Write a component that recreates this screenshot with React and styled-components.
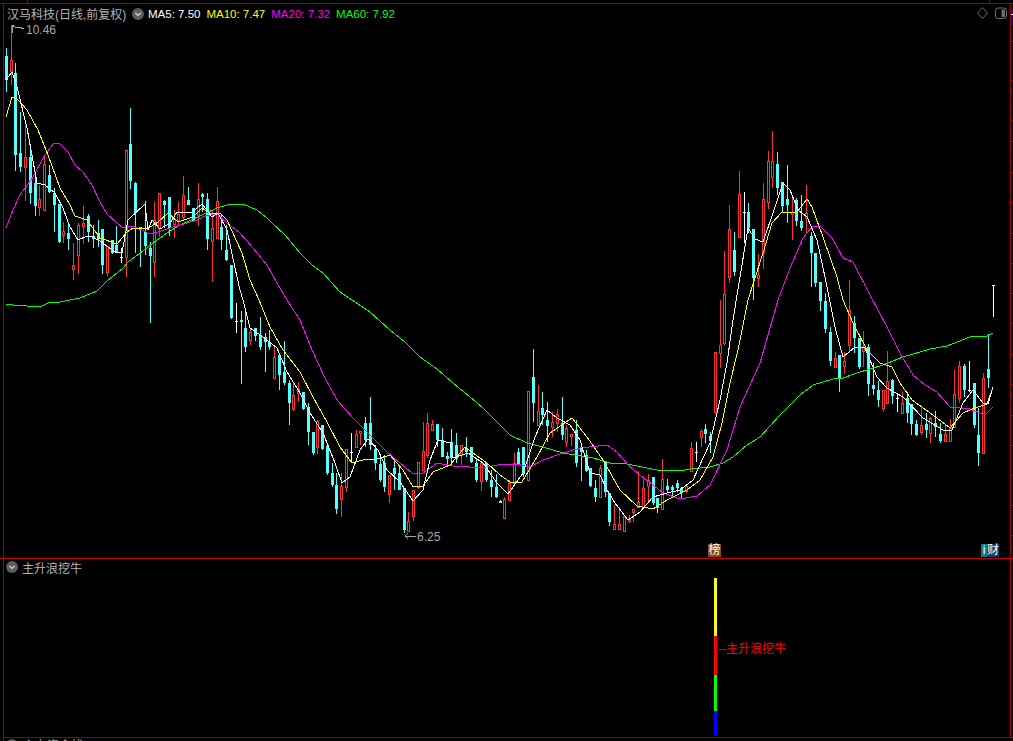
import React from 'react'
import styled, { createGlobalStyle } from 'styled-components'

// candles: x, high, body top, body bottom, low, kind (c = down, r = up hollow, w = doji)
const CANDLES = [
  [6,48,56,80,92,'c'],[11,25,60,71,85,'r'],[15,63,73,155,171,'c'],[20,112,153,167,172,'c'],[25,125,157,167,201,'r'],
  [30,150,157,193,204,'c'],[35,173,183,206,216,'c'],[39,185,199,207,216,'r'],[44,155,164,210,211,'r'],[49,165,175,192,193,'c'],
  [54,188,193,205,232,'c'],[59,204,204,242,243,'c'],[63,222,231,235,243,'r'],[68,223,233,239,250,'c'],[73,243,265,269,280,'r'],
  [78,223,225,255,274,'r'],[83,206,223,226,244,'r'],[88,214,216,232,242,'c'],[93,225,236,239,248,'c'],[98,220,233,239,247,'c'],
  [102,229,229,265,274,'c'],[107,246,246,272,276,'r'],[112,240,240,253,254,'c'],[116,226,245,252,252,'c'],[121,248,257,257,263,'w'],
  [126,150,150,257,277,'r'],[130,108,144,181,189,'c'],[135,182,183,213,253,'c'],[140,227,227,230,267,'c'],[145,201,232,246,255,'c'],
  [150,242,248,256,323,'c'],[154,202,220,262,277,'r'],[159,193,193,228,237,'r'],[164,200,201,205,228,'c'],[169,197,197,228,236,'c'],
  [174,210,219,224,238,'r'],[178,202,214,220,225,'r'],[183,176,195,217,220,'r'],[188,187,200,205,205,'c'],[193,208,208,221,222,'c'],
  [198,183,199,215,226,'r'],[202,193,194,197,212,'c'],[207,193,199,239,250,'c'],[212,210,228,241,282,'r'],[217,187,201,238,238,'r'],
  [221,215,227,240,250,'c'],[226,225,250,260,261,'c'],[231,265,265,318,319,'c'],[236,303,321,321,333,'w'],[241,311,320,322,384,'c'],
  [245,310,328,347,352,'c'],[250,328,332,340,345,'r'],[255,328,328,336,341,'c'],[260,317,335,347,350,'c'],[265,333,337,342,372,'c'],
  [269,330,342,347,350,'c'],[274,347,357,378,378,'r'],[279,355,355,375,390,'c'],[284,341,372,383,385,'c'],[289,380,383,403,425,'c'],
  [293,383,395,409,411,'r'],[298,382,389,393,402,'r'],[303,392,392,409,410,'c'],[308,403,407,432,445,'c'],[313,432,432,453,455,'c'],
  [317,420,421,447,454,'r'],[322,425,425,449,450,'c'],[327,446,446,473,475,'c'],[332,463,473,485,487,'c'],[336,473,485,509,514,'c'],
  [341,473,486,499,517,'r'],[346,449,449,487,492,'r'],[351,433,452,452,462,'w'],[356,430,434,447,447,'r'],[360,431,431,433,445,'r'],
  [365,417,423,440,447,'c'],[370,397,423,445,450,'c'],[375,445,449,463,470,'c'],[380,457,464,480,482,'c'],[384,455,463,487,492,'c'],
  [389,475,475,494,503,'r'],[394,458,468,474,490,'c'],[399,465,473,490,490,'c'],[404,488,488,530,533,'c'],[408,512,521,531,531,'r'],
  [413,490,490,516,521,'r'],[418,462,462,487,489,'r'],[423,422,451,470,470,'r'],[427,413,423,455,458,'r'],[432,420,424,430,431,'r'],
  [437,424,424,440,447,'c'],[442,428,440,457,457,'c'],[447,452,456,459,467,'c'],[451,429,442,458,465,'c'],[456,433,445,459,463,'c'],
  [461,445,445,455,465,'r'],[466,437,448,452,457,'c'],[471,447,447,462,463,'c'],[476,459,463,480,482,'c'],[481,463,463,481,491,'r'],
  [486,463,463,480,482,'c'],[491,470,480,487,497,'c'],[496,474,487,497,498,'c'],[500,500,501,503,503,'c'],[504,497,499,518,518,'r'],
  [509,480,483,500,500,'r'],[514,453,463,483,483,'r'],[518,448,452,464,464,'c'],[523,447,447,474,477,'c'],[528,391,391,480,480,'r'],
  [533,349,377,403,422,'c'],[538,385,411,425,425,'r'],[542,392,408,415,425,'c'],[547,402,420,426,442,'c'],[552,412,422,427,437,'r'],
  [557,409,414,423,432,'r'],[562,397,423,435,440,'c'],[566,425,428,442,447,'r'],[571,434,434,436,446,'r'],[576,420,430,463,467,'c'],
  [581,447,447,452,481,'c'],[586,450,455,471,472,'c'],[590,468,468,486,487,'c'],[595,480,488,497,502,'c'],[600,465,468,497,498,'r'],
  [605,461,462,492,497,'c'],[609,493,493,522,526,'c'],[614,505,524,529,530,'r'],[619,507,524,529,530,'r'],[624,515,516,531,532,'r'],
  [629,515,518,521,523,'r'],[633,509,509,512,522,'r'],[638,471,502,507,507,'r'],[643,478,488,507,507,'r'],[648,474,480,486,503,'r'],
  [653,477,477,503,505,'c'],[657,498,498,508,513,'c'],[662,459,479,509,510,'r'],[667,479,486,490,493,'c'],[672,485,487,490,497,'c'],
  [677,480,483,488,492,'c'],[681,487,488,493,498,'c'],[686,486,486,491,493,'r'],[691,442,448,471,472,'r'],[696,442,452,452,462,'w'],
  [701,429,431,437,447,'r'],[705,424,429,434,443,'c'],[710,432,436,441,453,'c'],[715,352,352,412,412,'r'],[720,300,345,353,368,'r'],
  [724,251,294,343,345,'r'],[729,205,229,277,283,'r'],[734,232,250,272,276,'c'],[739,171,194,237,237,'r'],[744,192,212,212,243,'w'],
  [748,203,212,228,233,'c'],[753,229,229,278,300,'c'],[758,254,275,278,287,'r'],[763,183,199,252,269,'r'],[768,151,161,202,209,'r'],
  [772,131,161,177,188,'r'],[777,152,164,188,195,'c'],[782,182,182,206,213,'c'],[787,165,199,205,223,'c'],[792,196,212,214,240,'r'],
  [796,198,200,221,226,'c'],[801,195,221,228,231,'c'],[806,185,213,218,233,'r'],[811,232,236,253,287,'c'],[815,253,253,283,287,'c'],
  [820,282,282,301,311,'c'],[825,293,301,329,333,'c'],[830,327,332,361,366,'c'],[835,352,358,367,368,'r'],[839,355,355,378,392,'c'],
  [844,352,361,366,374,'r'],[849,280,310,345,353,'r'],[854,316,323,338,353,'c'],[859,338,338,367,369,'c'],[863,331,347,351,367,'r'],
  [868,344,347,384,396,'c'],[873,363,385,389,395,'c'],[878,381,390,400,407,'c'],[883,390,390,408,412,'r'],[887,351,381,403,403,'r'],
  [892,379,380,396,404,'c'],[897,393,398,398,412,'w'],[902,392,403,413,413,'r'],[907,392,398,413,423,'c'],[911,404,404,424,435,'c'],
  [916,420,424,435,436,'c'],[921,408,425,432,435,'r'],[926,413,424,430,438,'c'],[930,417,418,433,443,'r'],[935,411,423,427,437,'c'],
  [940,423,434,441,443,'c'],[945,425,434,441,441,'r'],[950,419,428,441,441,'r'],[954,370,394,427,427,'r'],[959,361,366,398,403,'r'],
  [964,364,366,390,397,'c'],[969,361,390,390,392,'w'],[974,383,383,425,428,'c'],[978,408,435,453,466,'c'],[983,373,378,453,453,'r'],
  [988,334,369,378,388,'c'],[993,285,285,285,317,'w'],
]

const MA5 = '6,80 12,72 17,87 27,128 37,183 45,185 55,193 63,208 70,227 78,240 87,236 93,237 103,243 115,252 122,253 128,220 145,204 148,230 152,220 160,229 170,223 177,212 192,212 202,204 212,217 218,213 227,230 235,268 240,290 243,300 250,328 263,337 277,348 287,372 300,393 310,413 323,433 335,463 342,483 350,477 360,450 368,439 378,450 387,470 400,482 413,501 423,490 430,460 438,440 450,443 453,458 468,453 483,463 497,483 508,494 523,473 535,437 547,410 557,418 570,425 580,440 590,473 600,475 607,490 615,503 628,520 640,512 653,497 667,493 680,490 693,480 710,443 720,400 727,363 733,320 740,277 748,228 755,239 763,242 773,213 783,183 790,190 798,210 807,217 817,240 825,277 835,327 843,357 855,347 865,348 877,377 887,388 903,397 923,418 943,430 952,430 963,403 973,390 983,403 988,404 993,387'
const MA10 = '6,117 12,97 18,100 27,110 38,130 48,155 60,188 70,205 75,216 87,220 100,238 117,244 127,232 133,228 147,229 158,222 168,213 178,222 193,217 202,208 210,213 220,213 227,220 242,253 250,280 259,300 270,327 283,350 300,372 313,397 327,422 340,447 352,463 363,460 377,459 390,455 403,470 413,487 423,486 433,472 450,465 465,447 473,453 487,463 500,475 510,482 522,482 537,457 550,433 572,418 587,437 603,460 620,490 637,506 653,509 667,500 687,490 700,480 713,457 722,423 730,383 738,350 748,300 763,253 772,223 782,212 797,212 807,199 812,207 823,237 837,277 843,300 853,323 867,350 880,363 892,367 900,383 912,400 933,415 950,428 963,413 972,409 987,404 993,387'
const MA20 = '6,228 13,210 20,195 33,177 43,158 53,144 59,143 68,152 75,165 83,172 92,185 100,202 107,214 117,223 123,228 132,226 140,229 150,234 158,232 170,228 187,223 197,220 205,216 217,214 227,223 240,233 253,248 267,265 277,283 287,300 300,320 312,350 325,378 337,400 353,418 370,435 387,452 400,463 412,473 423,473 437,463 453,466 470,467 487,467 503,464 517,464 530,467 543,460 560,454 580,448 607,445 617,452 628,465 640,475 653,485 663,493 680,499 697,496 710,485 727,450 740,407 760,363 778,300 790,268 803,238 812,227 820,226 832,238 843,258 853,262 870,295 887,327 900,353 913,375 925,385 937,392 950,407 970,409 980,413 987,413 993,407'
const MA60 = '6,304 13,305 27,306 42,306 48,303 60,302 80,298 97,291 107,281 123,268 128,262 143,251 153,243 167,233 180,225 200,216 217,208 227,205 243,204 257,210 267,218 272,223 285,235 300,253 312,265 323,273 340,292 352,300 370,312 390,330 405,342 420,357 437,369 453,383 470,397 483,408 497,422 510,435 527,443 543,447 563,453 593,458 610,463 627,464 657,470 680,471 690,469 710,467 723,463 733,457 747,445 760,437 780,415 800,395 813,385 833,379 843,378 857,373 883,365 903,357 930,349 947,346 970,337 987,336 993,333'

const AVERAGES = [
  { id: 'ma60', points: MA60, color: '#00ff00' },
  { id: 'ma20', points: MA20, color: '#ff00ff' },
  { id: 'ma10', points: MA10, color: '#ffff00' },
  { id: 'ma5', points: MA5, color: '#ffffff' },
]

const LEGEND = [
  { label: 'MA5: 7.50', color: '#ffffff' },
  { label: 'MA10: 7.47', color: '#ffff00' },
  { label: 'MA20: 7.32', color: '#ff00ff' },
  { label: 'MA60: 7.92', color: '#00ff00' },
]

const SIGNALS = [
  { color: '#ffff00', height: 58 },
  { color: '#ff0000', height: 39 },
  { color: '#00ff00', height: 36 },
  { color: '#0000ff', height: 24 },
]

const TICKS = [41, 80, 120, 141, 172, 202, 233, 263, 293, 323, 354, 384, 415, 445, 475, 505, 535]

const CYAN = '#54ffff'
const RED = '#ff3232'
const FRAME = '#a00000'

const GlobalStyle = createGlobalStyle`
  html, body {
    margin: 0;
    background: #000;
    overflow: hidden;
  }
`

const Page = styled.div`
  width: 1013px;
  height: 741px;
  display: flex;
  flex-direction: column;
  overflow: hidden;
  background: #000;
  font-family: "Liberation Sans", "Noto Sans CJK SC", sans-serif;
  font-size: 12px;
`

const TopBar = styled.div`
  height: 3px;
  flex: none;
  display: flex;
  gap: 961px;
  padding-left: 27px;
  border-bottom: 1px solid ${FRAME};
`

const TabMark = styled.i`
  width: 1px;
  background: ${FRAME};
`

const Row = styled.div`
  display: flex;
  flex: none;
  height: ${p => p.$height}px;
  padding-left: 3px;
`

const Panel = styled.div`
  position: relative;
  width: 1006px;
  border-left: 1px solid ${FRAME};
  border-right: 1px solid ${FRAME};
`

const Rule = styled.div`
  height: 1px;
  flex: none;
  margin-left: ${p => p.$inset || 0}px;
  background: ${p => p.$color};
`

const Axis = styled.svg`
  width: 2px;
  height: 100%;
  display: block;
`

const ChartSvg = styled.svg`
  position: absolute;
  inset: 0;
  display: block;
  shape-rendering: crispEdges;
`

const Legend = styled.div`
  position: absolute;
  top: 1px;
  left: 3px;
  height: 17px;
  display: flex;
  align-items: center;
  white-space: nowrap;
`

const Title = styled.span`
  color: #b4b4b4;
  width: 125px;
`

const LegendItem = styled.span`
  color: ${p => p.$color};
  margin-right: 6px;
  font-size: 11.5px;
`

const ChevronIcon = styled.svg`
  width: 12px;
  height: 12px;
  flex: none;
  margin-right: ${p => p.$gap}px;
`

const WindowTools = styled.div`
  position: absolute;
  top: 3px;
  right: 3px;
  display: flex;
  align-items: center;
  gap: 7px;
`

const ToolIcon = styled.svg`
  display: block;
  width: ${p => p.$w}px;
  height: 12px;
`

const PriceTag = styled.span`
  position: absolute;
  left: ${p => p.$x - 4}px;
  top: ${p => p.$y - 4}px;
  color: #a8a8a8;
  font-size: 12px;
  line-height: 14px;
`

const Badge = styled.span`
  position: absolute;
  left: ${p => p.$x - 4}px;
  top: 540px;
  width: ${p => p.$w}px;
  height: 13px;
  display: flex;
  align-items: center;
  justify-content: center;
  background: ${p => p.$bg};
  color: #fff;
  font-size: 12px;
  line-height: 13px;
`

const SubHeader = styled.div`
  position: absolute;
  top: 1px;
  left: 2px;
  height: 14px;
  display: flex;
  align-items: center;
  color: #b4b4b4;
`

const SignalStack = styled.div`
  position: relative;
  width: 3px;
  margin: 19px 0 0 710px;
  display: flex;
  flex-direction: column;
`

const SignalBar = styled.div`
  height: ${p => p.$height}px;
  background: ${p => p.$color};
`

const SignalLabel = styled.span`
  position: absolute;
  left: 4px;
  top: 64px;
  color: #ff0000;
  line-height: 14px;
  white-space: nowrap;
`

const Footer = styled.div`
  flex: 1;
  min-height: 0;
  overflow: hidden;
  display: flex;
  align-items: flex-start;
  gap: 5px;
  margin-left: 3px;
  padding: 1px 0 0 2px;
  border-left: 1px solid ${FRAME};
  color: #a8a8a8;
  line-height: 14px;
`

const Candle = ({ x, hi, top, bot, lo, kind }) => {
  if (kind === 'w') {
    return (
      <g stroke="#ffffff">
        <line x1={x + 0.5} x2={x + 0.5} y1={hi} y2={lo} />
        <line x1={x - 1} x2={x + 2} y1={top + 0.5} y2={top + 0.5} />
      </g>
    )
  }
  if (kind === 'c') {
    return (
      <g>
        <line x1={x + 0.5} x2={x + 0.5} y1={hi} y2={lo} stroke={CYAN} />
        <rect x={x - 1} y={top} width={3} height={bot - top} fill={CYAN} />
      </g>
    )
  }
  return (
    <g>
      <line x1={x + 0.5} x2={x + 0.5} y1={hi} y2={top} stroke={RED} />
      <line x1={x + 0.5} x2={x + 0.5} y1={bot} y2={lo} stroke={RED} />
      <rect x={x - 0.5} y={top + 0.5} width={2} height={bot - top} fill="#000" stroke={RED} />
    </g>
  )
}

const Chevron = ({ gap }) => (
  <ChevronIcon $gap={gap} viewBox="0 0 12 12">
    <circle cx="6" cy="6" r="6" fill="#5c5c5c" />
    <path d="M3.2 4.8 6 7.6 8.8 4.8" fill="none" stroke="#c8c8c8" strokeWidth="1.4" />
  </ChevronIcon>
)

const MainChart = () => (
  <ChartSvg width="1006" height="554" viewBox="4 4 1006 554">
    {CANDLES.map(([x, hi, top, bot, lo, kind]) => (
      <Candle key={x} x={x} hi={hi} top={top} bot={bot} lo={lo} kind={kind} />
    ))}
    {AVERAGES.map(ma => (
      <polyline key={ma.id} points={ma.points} fill="none" stroke={ma.color} strokeWidth="1" />
    ))}
    <path d="M12 25V33M12 25L15 27M15 27H19L24 29" fill="none" stroke="#a8a8a8" />
    <path d="M405 536H416M405 536L408 533M405 536L408 539" fill="none" stroke="#a8a8a8" />
  </ChartSvg>
)

const App = () => (
  <Page>
    <GlobalStyle />
    <TopBar>
      <TabMark />
      <TabMark />
    </TopBar>

    <Row $height={554}>
      <Panel>
        <MainChart />
        <Legend>
          <Title>汉马科技(日线,前复权)</Title>
          <Chevron gap={4} />
          {LEGEND.map(item => (
            <LegendItem key={item.label} $color={item.color}>{item.label}</LegendItem>
          ))}
        </Legend>
        <WindowTools>
          <ToolIcon $w={11} viewBox="0 0 11 12">
            <path d="M5.5 .5 10.5 6 5.5 11.5 .5 6Z" fill="none" stroke="#6c6c6c" />
          </ToolIcon>
          <ToolIcon $w={12} viewBox="0 0 12 12">
            <rect x=".5" y="1" width="11" height="10.5" rx="2.5" fill="none" stroke="#6c6c6c" />
            <rect x="6.5" y="2.5" width="3.5" height="7.5" fill="#6c6c6c" />
          </ToolIcon>
        </WindowTools>
        <PriceTag $x={26} $y={23}>10.46</PriceTag>
        <PriceTag $x={417} $y={530}>6.25</PriceTag>
        <Badge $x={708} $w={13} $bg="#8a4a10">榜</Badge>
        <Badge $x={981} $w={6} $bg="#0e7c8c">i</Badge>
        <Badge $x={987} $w={12} $bg="#0c3f70">财</Badge>
      </Panel>
      <Axis viewBox="0 4 2 554">
        <rect x="0" y="9" width="2" height="16" fill="#10106e" />
        <rect x="0" y="14" width="2" height="1" fill="#ffffff" />
        {TICKS.map(y => <rect key={y} x="0" y={y} width="2" height="1" fill={FRAME} />)}
      </Axis>
    </Row>

    <Rule $color="#c80000" />

    <Row $height={178}>
      <Panel>
        <SubHeader>
          <Chevron gap={4} />
          主升浪挖牛
        </SubHeader>
        <SignalStack>
          {SIGNALS.map(s => <SignalBar key={s.color} $color={s.color} $height={s.height} />)}
          <SignalLabel>--主升浪挖牛</SignalLabel>
        </SignalStack>
      </Panel>
    </Row>

    <Rule $color="#a00000" $inset={3} />

    <Footer>
      <Chevron gap={0} />
      主力资金线
    </Footer>
  </Page>
)

export default App
